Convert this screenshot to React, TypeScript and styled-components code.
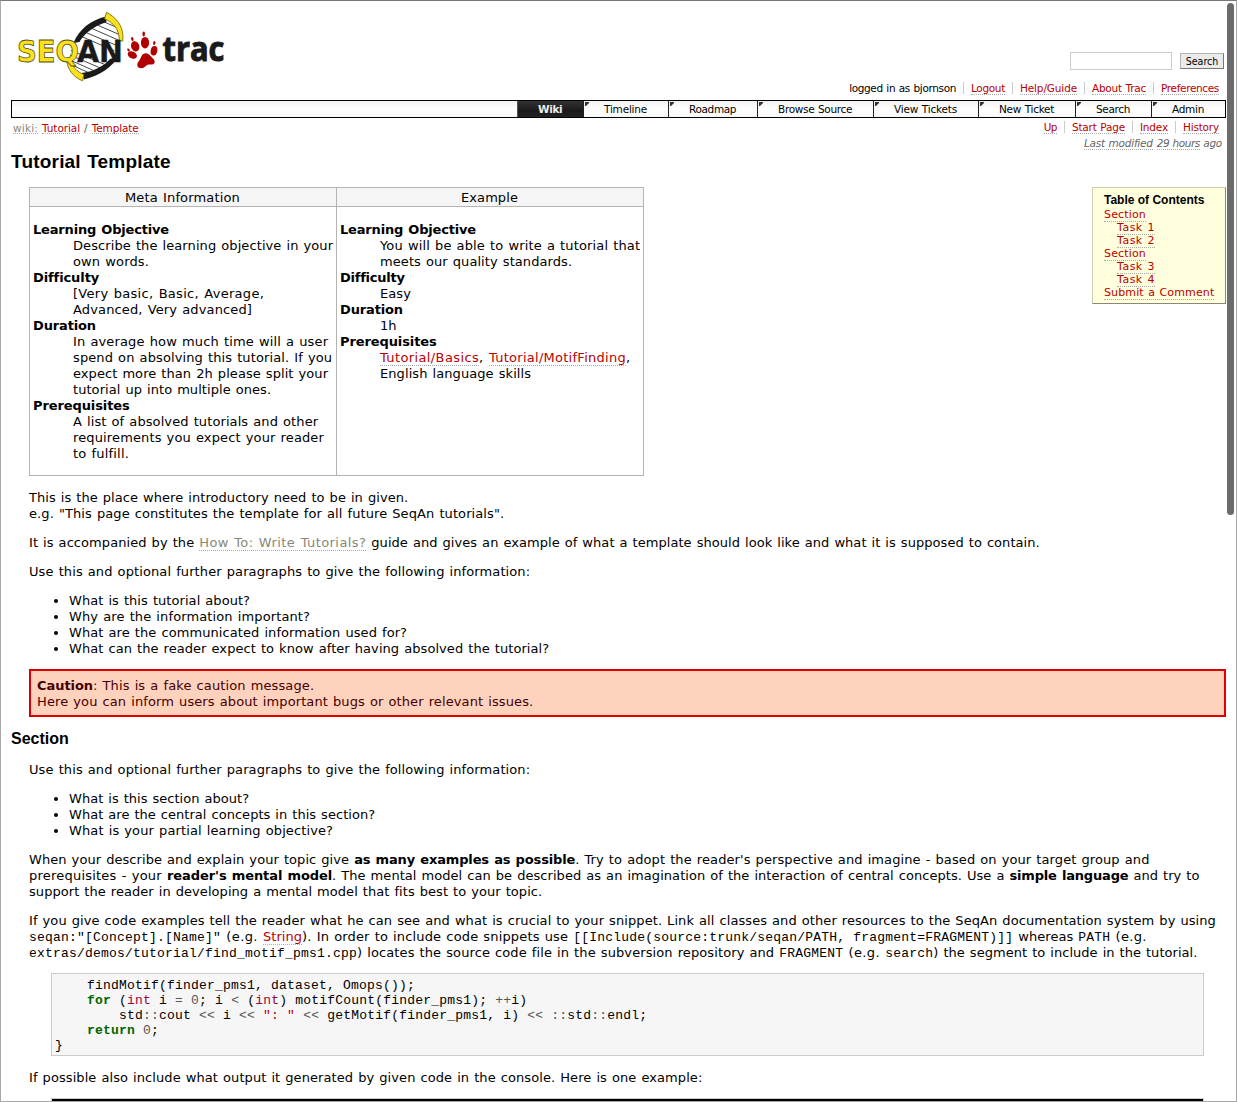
import React from 'react';
import styled, { createGlobalStyle } from 'styled-components';

const SANS = '"DejaVu Sans", Verdana, sans-serif';
const ARIAL = '"Liberation Sans", Arial, sans-serif';
const MONO = '"Liberation Mono", "Courier New", monospace';

const GlobalStyle = createGlobalStyle`
  html, body { margin: 0; padding: 0; background: #fff; overflow: hidden; }
  *, *::before, *::after { box-sizing: border-box; }
`;

const Window = styled.div`
  position: relative;
  width: 1237px;
  height: 1102px;
  overflow: hidden;
  padding: 0 10px;
  background: #fff;
  border: 1px solid #a9a9a9;
  border-top-color: #777;
  color: #000;
  font: 13px/16px ${SANS};
  letter-spacing: 0.08px;
  word-spacing: 0.8px;
  white-space: nowrap;
`;

const Scrollbar = styled.div`
  position: absolute;
  top: 2px;
  right: 2px;
  width: 7px;
  height: 512px;
  border-radius: 4px;
  background: #6b6b6b;
`;

/* Run of text with its own letter spacing */
const T = styled.span<{ $t?: number }>`
  letter-spacing: ${p => p.$t ?? 0.08}px;
`;

const B = styled.strong<{ $t?: number }>`
  font-weight: 700;
  letter-spacing: ${p => p.$t ?? -0.1}px;
`;

const Link = styled.a<{ $t?: number; $missing?: boolean }>`
  color: ${p => (p.$missing ? '#887' : '#b00')};
  text-decoration: none;
  border-bottom: 1px dotted #aaa;
  letter-spacing: ${p => p.$t ?? 0.08}px;
`;

const Header = styled.header`
  display: flex;
  justify-content: space-between;
  height: 99px;
`;

const LogoArt = styled.svg`
  display: block;
  width: 220px;
  height: 84px;
`;

const HeaderTools = styled.div`
  display: flex;
  flex-direction: column;
  align-items: flex-end;
  padding-top: 51px;
`;

const SearchForm = styled.form`
  display: flex;
  align-items: center;
  gap: 8px;
  height: 18px;
  padding-right: 2px;
`;

const SearchInput = styled.input`
  width: 102px;
  height: 18px;
  padding: 0 2px;
  border: 1px solid #ccc;
  border-radius: 0;
  background: #fff;
  outline: none;
`;

const SearchButton = styled.button`
  width: 44px;
  height: 16px;
  padding: 0;
  border: 1px solid #b4b4b4;
  border-right-color: #777;
  border-bottom-color: #777;
  border-radius: 0;
  background: #ebebeb;
  color: #000;
  font: 10.5px/13px "DejaVu Sans Condensed", "DejaVu Sans", sans-serif;
  font-stretch: condensed;
  letter-spacing: 0;
`;

const LinkList = styled.ul`
  display: flex;
  align-items: center;
  margin: 0;
  padding: 0;
  list-style: none;
  font-size: 10.5px;
  line-height: 13px;
  word-spacing: 0.6px;
`;

const MetaLinks = styled(LinkList)`
  margin-top: 12px;
`;

const LinkItem = styled.li`
  height: 12px;
  padding: 0 7px;
  border-left: 1px solid #ccc;
  &:first-child { border-left: 0; }
`;

const Tabs = styled.nav`
  display: flex;
  justify-content: flex-end;
  height: 18px;
  border: 1px solid #000;
  background: linear-gradient(#f2f2f2, #fff 50%, #f8f8f8);
  font-size: 10.5px;
  line-height: 15px;
  word-spacing: 0.6px;
`;

const Tab = styled.a<{ $w: number; $active?: boolean; $t?: number }>`
  position: relative;
  width: ${p => p.$w}px;
  padding: 1px 0 0 20px;
  border-left: 1px solid ${p => (p.$active ? '#555' : '#222')};
  color: ${p => (p.$active ? '#eee' : '#000')};
  font-weight: ${p => (p.$active ? 700 : 400)};
  letter-spacing: ${p => p.$t ?? 0}px;
  background: ${p => (p.$active ? 'linear-gradient(#333, #1a1a1a 60%, #222)' : 'transparent')};
  &::before {
    content: '';
    display: ${p => (p.$active ? 'none' : 'block')};
    position: absolute;
    left: 1px;
    top: 1px;
    width: 4px;
    height: 4px;
    background: #333;
    clip-path: polygon(0 0, 100% 0, 100% 25%, 25% 100%, 0 100%);
  }
`;

const SubBar = styled.div`
  display: flex;
  justify-content: space-between;
  align-items: flex-start;
  height: 31px;
  padding: 3px 0 0 2px;
`;

const Breadcrumbs = styled.div`
  display: flex;
  gap: 4px;
  margin-top: 1px;
  color: #555;
  font-size: 10.5px;
  line-height: 12px;
`;

const Crumb = styled(Link)`
  height: 12px;
`;

const ContextArea = styled.div`
  display: flex;
  flex-direction: column;
  align-items: flex-end;
`;

const Modified = styled.div`
  padding-right: 4px;
  margin-top: 4px;
  color: #666;
  font-size: 10.5px;
  font-style: italic;
  line-height: 13px;
  word-spacing: 0.6px;
`;

const ModifiedLink = styled(Link)`
  color: #666;
`;

const PageTitle = styled.h1`
  margin: 0;
  height: 38px;
  padding-top: 2px;
  font: 700 19px/22px ${ARIAL};
  letter-spacing: 0.2px;
`;

const SectionTitle = styled.h2`
  margin: 12px 0 14px;
  font: 700 16px/19px ${ARIAL};
  letter-spacing: 0;
`;

const Body = styled.div`
  padding-left: 18px;
`;

const TopRow = styled.div`
  display: flex;
  justify-content: space-between;
  align-items: flex-start;
  margin-bottom: 14px;
`;

const MetaTable = styled.div`
  display: grid;
  grid-template-columns: 307px 307px;
  grid-template-rows: 20px 269px;
  width: 615px;
  border-right: 1px solid #b4b4b4;
`;

const HeadCell = styled.div`
  padding-right: 1px;
  border: 1px solid #b4b4b4;
  border-right: 0;
  background: #f5f5f5;
  line-height: 19px;
  text-align: center;
`;

const Cell = styled.div`
  padding: 15px 3px 0;
  border: 1px solid #b4b4b4;
  border-width: 0 0 1px 1px;
`;

const Definitions = styled.dl`
  margin: 0;
`;

const Term = styled.dt<{ $t?: number }>`
  font-weight: 700;
  letter-spacing: ${p => p.$t ?? -0.1}px;
`;

const Detail = styled.dd`
  margin: 0 0 0 40px;
`;

const Toc = styled.aside`
  width: 134px;
  height: 117px;
  padding: 5px 0 0 11px;
  border: 1px solid #cdcdb0;
  border-right-color: #887;
  border-bottom-color: #887;
  background: #ffd;
  font-size: 11px;
  line-height: 13px;
`;

const TocTitle = styled.h4`
  margin: 0 0 1px;
  font: 700 12px/14px ${ARIAL};
  letter-spacing: 0;
  word-spacing: 0;
`;

const TocEntry = styled.div<{ $nested?: boolean }>`
  height: 13px;
  padding-left: ${p => (p.$nested ? 13 : 0)}px;
`;

const P = styled.p`
  margin: 13px 0;
`;

const Bullets = styled.ul`
  margin: 13px 0;
  padding-left: 40px;
  list-style: disc;
`;

const Caution = styled.div`
  height: 48px;
  margin-top: -1px;
  padding: 7px 6px 0;
  border: 2px solid #d00;
  background: #ffd2bd;
  color: #400;
`;

const Code = styled.code`
  font: 13px/13px ${MONO};
  letter-spacing: 0.2px;
  word-spacing: 0;
`;

const CodeBlock = styled.pre`
  width: 1153px;
  height: 83px;
  margin: -1px 0 14px 22px;
  padding: 4px 3px 0;
  border: 1px solid #ccc;
  background: #f6f6f6;
  font: 13px/15px ${MONO};
  letter-spacing: 0.2px;
  word-spacing: 0;
`;

const CodeLine = styled.div<{ $indent?: number }>`
  height: 15px;
  padding-left: ${p => (p.$indent ?? 0) * 8}px;
`;

const Console = styled.div`
  width: 1153px;
  height: 60px;
  margin: -1px 0 0 22px;
  border: 1px solid #ccc;
  background: #000;
`;

const Kw = styled.span`
  color: #060;
  font-weight: 700;
`;
const Ty = styled.span`
  color: #a0003c;
`;
const Op = styled.span`
  color: #555;
`;
const St = styled.span`
  color: #b00;
`;

function Logo() {
  return (
    <LogoArt viewBox="11 1 220 84" role="img" aria-label="SeqAn Trac">
      <defs>
        <clipPath id="helix">
          <path d="M106 17 C93 21 82 30 77 46 L69 52 C68 62 75 71 84 74 C98 72 112 62 116 46 L122 38 C121 28 114 20 106 17Z" />
        </clipPath>
      </defs>
      <g clipPath="url(#helix)">
        <rect x="65" y="12" width="60" height="66" fill="#fff" />
        <path
          d="M95 18 L125 31 M88 21 L125 37 M84 25 L125 43 M80 30 L125 49 M78 35 L122 54 M70 50 L118 70 M70 55 L112 73 M70 60 L106 76 M72 65 L98 77"
          stroke="#333"
          strokeWidth="0.9"
        />
      </g>
      <path d="M106 16.500 C91 20 79 29 73.500 43 L79.500 42 C84 34 92 27 106.500 22Z" fill="#1a1a1a" />
      <path d="M119 56 C112 67 100 75.500 84 79.500 L81.500 73 C94 71.500 104 66 110 59Z" fill="#1a1a1a" />
      <path d="M106.500 12.300 C115 17 124.500 25 122.800 41 L119.300 41 C119.500 29 113 22.500 104.500 18.800Z" fill="#fbe01c" stroke="#6a6200" strokeWidth="0.8" />
      <path d="M66.500 59 C67 69 73 77 82.500 80.800 L84 74.500 C77 72 72.500 67 71.500 60Z" fill="#fbe01c" stroke="#6a6200" strokeWidth="0.8" />
      <text x="17" y="61.500" fontFamily="DejaVu Sans, sans-serif" fontWeight="700" fontSize="30" textLength="62" lengthAdjust="spacingAndGlyphs" letterSpacing="0" fill="#fbe01c" stroke="#555010" strokeWidth="0.8">SEQ</text>
      <text x="77" y="61.500" fontFamily="DejaVu Sans, sans-serif" fontWeight="700" fontSize="30" textLength="46" lengthAdjust="spacingAndGlyphs" letterSpacing="0" fill="#1a1a1a" stroke="#1a1a1a" strokeWidth="0.3">AN</text>
      <g fill="#b00000">
        <ellipse cx="135.200" cy="46.300" rx="4.100" ry="5.200" transform="rotate(-18 135.200 46.300)" />
        <ellipse cx="145" cy="42.700" rx="4.100" ry="5.800" />
        <ellipse cx="154" cy="50.800" rx="3.300" ry="4.800" transform="rotate(12 154 50.800)" />
        <ellipse cx="132.300" cy="55" rx="4.900" ry="3.500" transform="rotate(28 132.300 55)" />
        <ellipse cx="132.300" cy="39" rx="1.200" ry="2.100" transform="rotate(-15 132.300 39)" />
        <ellipse cx="143.700" cy="34" rx="1.300" ry="2.400" />
        <ellipse cx="154.300" cy="43" rx="1.200" ry="2" transform="rotate(10 154.300 43)" />
        <ellipse cx="128.500" cy="50" rx="1.100" ry="1.700" transform="rotate(-30 128.500 50)" />
        <path d="M144.500 53.500 C148 52.500 150 55.500 152 57.500 C155 60 155.500 62.500 153.500 64 C151 65.500 148.500 63.500 146.500 65.500 C144.500 67.500 142.500 68.500 140 68 C137 67.500 136.500 64 138.500 61.500 C141 59 141 54.500 144.500 53.500Z" />
      </g>
      <text x="162.500" y="61" fontFamily="Open Sans, sans-serif" fontWeight="700" fontSize="34" textLength="62" lengthAdjust="spacingAndGlyphs" letterSpacing="0" wordSpacing="0" fill="#1a1a1a" stroke="#1a1a1a" strokeWidth="1">trac</text>
    </LogoArt>
  );
}

const metaLinks: [string, number][] = [
  ['Logout', -0.33],
  ['Help/Guide', -0.13],
  ['About Trac', -0.24],
  ['Preferences', -0.34],
];

const contextLinks: [string, number][] = [
  ['Up', -0.6],
  ['Start Page', -0.2],
  ['Index', -0.18],
  ['History', -0.19],
];

const tabs: { label: string; w: number; t?: number; active?: boolean }[] = [
  { label: 'Wiki', w: 66, t: -0.4, active: true },
  { label: 'Timeline', w: 85, t: -0.2 },
  { label: 'Roadmap', w: 89, t: -0.36 },
  { label: 'Browse Source', w: 116, t: -0.32 },
  { label: 'View Tickets', w: 105, t: -0.2 },
  { label: 'New Ticket', w: 97, t: -0.28 },
  { label: 'Search', w: 76, t: -0.33 },
  { label: 'Admin', w: 74, t: -0.28 },
];

const toc: { label: string; nested?: boolean; t: number }[] = [
  { label: 'Section', t: 0.16 },
  { label: 'Task 1', nested: true, t: 0.5 },
  { label: 'Task 2', nested: true, t: 0.5 },
  { label: 'Section', t: 0.16 },
  { label: 'Task 3', nested: true, t: 0.5 },
  { label: 'Task 4', nested: true, t: 0.5 },
  { label: 'Submit a Comment', t: 0.13 },
];

export default function App() {
  return (
    <Window>
      <GlobalStyle />
      <Header>
        <Logo />
        <HeaderTools>
          <SearchForm>
            <SearchInput aria-label="Search" />
            <SearchButton type="button">Search</SearchButton>
          </SearchForm>
          <MetaLinks>
            <LinkItem><T $t={-0.36}>logged in as bjornson</T></LinkItem>
            {metaLinks.map(([label, t]) => (
              <LinkItem key={label}><Link $t={t}>{label}</Link></LinkItem>
            ))}
          </MetaLinks>
        </HeaderTools>
      </Header>

      <Tabs>
        {tabs.map(tab => (
          <Tab key={tab.label} $w={tab.w} $t={tab.t} $active={tab.active}>{tab.label}</Tab>
        ))}
      </Tabs>

      <SubBar>
        <Breadcrumbs>
          <Crumb $missing $t={0.19}>wiki:</Crumb>
          <Crumb $t={-0.07}>Tutorial</Crumb>
          <T>/</T>
          <Crumb $t={-0.11}>Template</Crumb>
        </Breadcrumbs>
        <ContextArea>
          <LinkList>
            {contextLinks.map(([label, t]) => (
              <LinkItem key={label}><Link $t={t}>{label}</Link></LinkItem>
            ))}
          </LinkList>
          <Modified>
            <ModifiedLink $t={-0.23}>Last modified</ModifiedLink>{' '}
            <ModifiedLink $t={-0.48}>29 hours</ModifiedLink>
            <T $t={-0.3}> ago</T>
          </Modified>
        </ContextArea>
      </SubBar>

      <PageTitle>Tutorial Template</PageTitle>

      <Body>
        <TopRow>
          <MetaTable>
            <HeadCell><T $t={0.16}>Meta Information</T></HeadCell>
            <HeadCell>Example</HeadCell>
            <Cell>
              <Definitions>
                <Term $t={-0.18}>Learning Objective</Term>
                <Detail>
                  <T $t={0.09}>Describe the learning objective in your</T><br />
                  <T $t={0.14}>own words.</T>
                </Detail>
                <Term>Difficulty</Term>
                <Detail>
                  <T $t={0.3}>[Very basic, Basic, Average,</T><br />
                  <T $t={0.14}>Advanced, Very advanced]</T>
                </Detail>
                <Term $t={-0.14}>Duration</Term>
                <Detail>
                  <T $t={0.14}>In average how much time will a user</T><br />
                  <T $t={0.11}>spend on absolving this tutorial. If you</T><br />
                  <T $t={0.07}>expect more than 2h please split your</T><br />
                  <T $t={0.06}>tutorial up into multiple ones.</T>
                </Detail>
                <Term>Prerequisites</Term>
                <Detail>
                  <T $t={0.1}>A list of absolved tutorials and other</T><br />
                  <T $t={0.13}>requirements you expect your reader</T><br />
                  <T $t={0.19}>to fulfill.</T>
                </Detail>
              </Definitions>
            </Cell>
            <Cell>
              <Definitions>
                <Term $t={-0.18}>Learning Objective</Term>
                <Detail>
                  <T $t={0.14}>You will be able to write a tutorial that</T><br />
                  <T>meets our quality standards.</T>
                </Detail>
                <Term $t={-0.25}>Difficulty</Term>
                <Detail>Easy</Detail>
                <Term $t={-0.14}>Duration</Term>
                <Detail>1h</Detail>
                <Term>Prerequisites</Term>
                <Detail>
                  <Link $t={0.38}>Tutorial/Basics</Link><T $t={0.4}>, </T>
                  <Link $t={0.27}>Tutorial/MotifFinding</Link>,<br />
                  <T>English language skills</T>
                </Detail>
              </Definitions>
            </Cell>
          </MetaTable>
          <Toc>
            <TocTitle>Table of Contents</TocTitle>
            {toc.map((entry, i) => (
              <TocEntry key={i} $nested={entry.nested}>
                <Link $t={entry.t}>{entry.label}</Link>
              </TocEntry>
            ))}
          </Toc>
        </TopRow>

        <P>
          <T $t={0.06}>This is the place where introductory need to be in given.</T><br />
          <T $t={0.09}>e.g. "This page constitutes the template for all future SeqAn tutorials".</T>
        </P>
        <P>
          <T $t={0.07}>It is accompanied by the </T>
          <Link $missing $t={0.42}>How To: Write Tutorials?</Link>
          <T $t={0.055}> guide and gives an example of what a template should look like and what it is supposed to contain.</T>
        </P>
        <P><T $t={0.103}>Use this and optional further paragraphs to give the following information:</T></P>
        <Bullets>
          <li><T $t={0.063}>What is this tutorial about?</T></li>
          <li><T $t={0.119}>Why are the information important?</T></li>
          <li><T $t={0.084}>What are the communicated information used for?</T></li>
          <li><T $t={0.067}>What can the reader expect to know after having absolved the tutorial?</T></li>
        </Bullets>
        <Caution>
          <B $t={-0.06}>Caution</B><T $t={0.116}>: This is a fake caution message.</T><br />
          <T $t={0.104}>Here you can inform users about important bugs or other relevant issues.</T>
        </Caution>
      </Body>

      <SectionTitle>Section</SectionTitle>

      <Body>
        <P><T $t={0.103}>Use this and optional further paragraphs to give the following information:</T></P>
        <Bullets>
          <li><T $t={0.032}>What is this section about?</T></li>
          <li><T $t={0.039}>What are the central concepts in this section?</T></li>
          <li><T $t={0.113}>What is your partial learning objective?</T></li>
        </Bullets>
        <P>
          <T $t={0.07}>When your describe and explain your topic give </T>
          <B $t={-0.139}>as many examples as possible</B>
          <T $t={0.097}>. Try to adopt the reader's perspective and imagine - based on your target group and</T><br />
          <T $t={0.219}>prerequisites - your </T>
          <B $t={-0.094}>reader's mental model</B>
          <T $t={0.057}>. The mental model can be described as an imagination of the interaction of central concepts. Use a </T>
          <B $t={-0.172}>simple language</B>
          <T $t={0.055}> and try to</T><br />
          <T $t={0.058}>support the reader in developing a mental model that fits best to your topic.</T>
        </P>
        <P>
          <T $t={0.078}>If you give code examples tell the reader what he can see and what is crucial to your snippet. Link all classes and other resources to the SeqAn documentation system by using</T><br />
          <Code>seqan:"[Concept].[Name]"</Code>
          <T $t={0.368}> (e.g. </T>
          <Link $t={0.034}>String</Link>
          <T $t={0.152}>). In order to include code snippets use </T>
          <Code>[[Include(source:trunk/seqan/PATH, fragment=FRAGMENT)]]</Code>
          <T $t={0.056}> whereas </T>
          <Code>PATH</Code>
          <T $t={0.3}> (e.g.</T><br />
          <Code>extras/demos/tutorial/find_motif_pms1.cpp</Code>
          <T $t={0.1}>) locates the source code file in the subversion repository and </T>
          <Code>FRAGMENT</Code>
          <T $t={0.368}> (e.g. </T>
          <Code>search</Code>
          <T $t={0.043}>) the segment to include in the tutorial.</T>
        </P>
        <CodeBlock>
          <CodeLine $indent={4}>findMotif(finder_pms1, dataset, Omops());</CodeLine>
          <CodeLine $indent={4}>
            <Kw>for</Kw>{' ('}<Ty>int</Ty>{' i '}<Op>=</Op>{' '}<Op>0</Op>{'; i '}<Op>{'<'}</Op>{' ('}<Ty>int</Ty>
            {') motifCount(finder_pms1); '}<Op>++</Op>{'i)'}
          </CodeLine>
          <CodeLine $indent={8}>
            {'std'}<Op>::</Op>{'cout '}<Op>{'<<'}</Op>{' i '}<Op>{'<<'}</Op>{' '}<St>": "</St>{' '}
            <Op>{'<<'}</Op>{' getMotif(finder_pms1, i) '}<Op>{'<<'}</Op>{' '}
            <Op>::</Op>{'std'}<Op>::</Op>{'endl;'}
          </CodeLine>
          <CodeLine $indent={4}><Kw>return</Kw>{' '}<Op>0</Op>{';'}</CodeLine>
          <CodeLine>{'}'}</CodeLine>
        </CodeBlock>
        <P><T $t={0.08}>If possible also include what output it generated by given code in the console. Here is one example:</T></P>
        <Console />
      </Body>
      <Scrollbar />
    </Window>
  );
}
